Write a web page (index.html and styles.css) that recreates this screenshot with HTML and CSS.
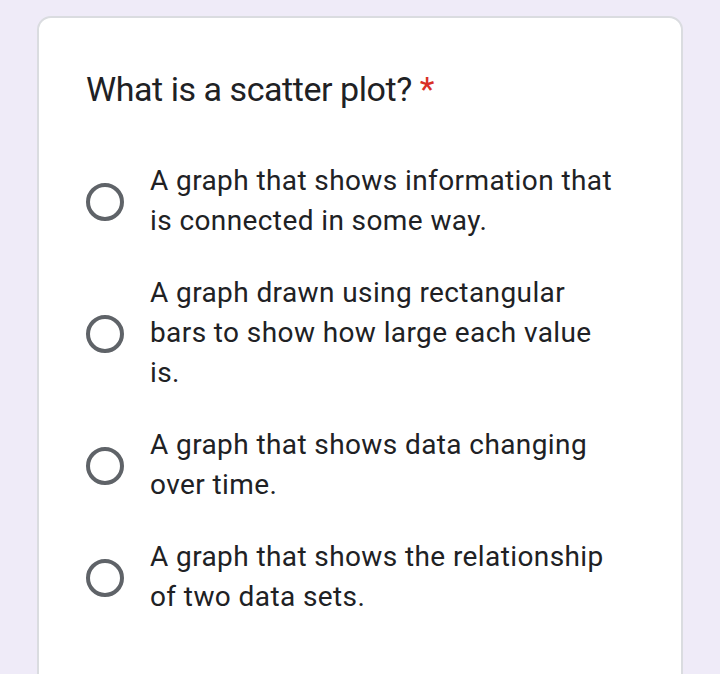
FILE: index.html
```html
<!DOCTYPE html>
<html>
<head>
<meta charset="utf-8">
<link rel="stylesheet" href="styles.css">
</head>
<body>
<div class="card">
  <div class="title">What is a scatter plot? <span class="req">*</span></div>
  <div class="options">
    <div class="option"><span class="radio"></span><span class="label">A graph that shows information that is connected in some way.</span></div>
    <div class="option"><span class="radio"></span><span class="label">A graph drawn using rectangular bars to show how large each value is.</span></div>
    <div class="option"><span class="radio"></span><span class="label">A graph that shows data changing over time.</span></div>
    <div class="option"><span class="radio"></span><span class="label">A graph that shows the relationship of two data sets.</span></div>
  </div>
</div>
</body>
</html>
```
FILE: styles.css
```css
html, body {
  margin: 0;
  padding: 0;
  background: #efebf8;
  height: 674px;
  overflow: hidden;
}
body {
  padding: 16px 37px 0 37px;
  box-sizing: border-box;
  font-family: Roboto, "Noto Sans", sans-serif;
  color: #202124;
}
.card {
  background: #fff;
  border: 2px solid #dadce0;
  border-radius: 14px;
  height: 700px;
  padding: 49px 47px 0 47px;
  box-sizing: border-box;
}
.title {
  font-size: 34px;
  line-height: 44px;
  letter-spacing: -0.45px;
}
.req {
  color: #d93025;
}
.options {
  margin-top: 50px;
  display: flex;
  flex-direction: column;
  gap: 32px;
}
.option {
  display: flex;
  align-items: center;
}
.radio {
  width: 30px;
  height: 30px;
  border: 4px solid #5f6368;
  border-radius: 50%;
  flex: none;
  margin-right: 26px;
  margin-top: 2px;
}
.label {
  font-size: 28px;
  line-height: 40px;
  width: 472px;
  letter-spacing: 0.4px;
}
```
